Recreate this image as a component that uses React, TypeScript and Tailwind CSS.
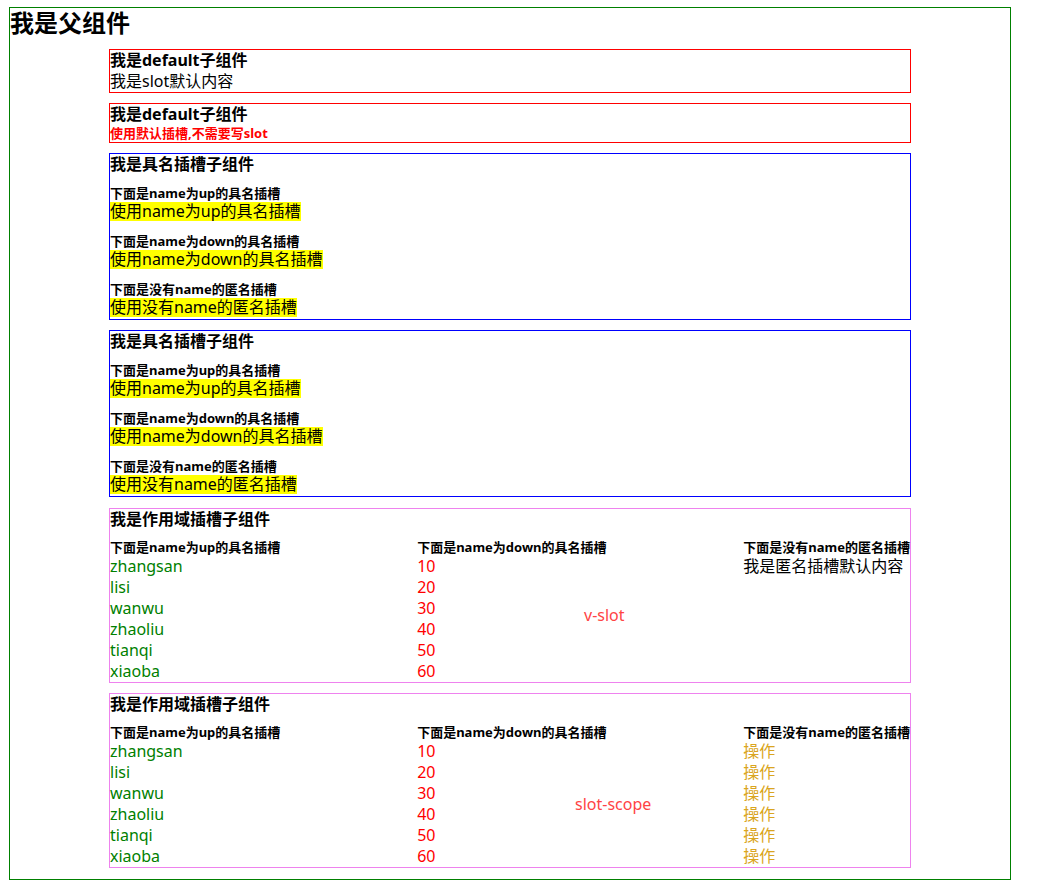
const font = { fontFamily: '"Noto Sans", "Noto Sans CJK SC", sans-serif' };

const people = [
  { name: "zhangsan", age: 10 },
  { name: "lisi", age: 20 },
  { name: "wanwu", age: 30 },
  { name: "zhaoliu", age: 40 },
  { name: "tianqi", age: 50 },
  { name: "xiaoba", age: 60 },
];

function Title({ children }: { children: React.ReactNode }) {
  return <div className="text-[16px] font-bold leading-[21px] text-black">{children}</div>;
}

function SmallHead({ children }: { children: React.ReactNode }) {
  return <div className="text-[13px] font-bold leading-[17px] text-black whitespace-nowrap">{children}</div>;
}

function Yellow({ children }: { children: React.ReactNode }) {
  return (
    <div className="h-[21px] text-[16px] leading-[19px]">
      <span className="inline-block bg-[#ffff00] align-top leading-[19px] text-black">{children}</span>
    </div>
  );
}

function NamedSlot({ className }: { className: string }) {
  return (
    <div className={"mx-auto w-[802px] border border-[#0000ff] " + className}>
      <Title>我是具名插槽子组件</Title>
      <div className="mt-[10px]">
        <SmallHead>下面是name为up的具名插槽</SmallHead>
        <Yellow>使用name为up的具名插槽</Yellow>
      </div>
      <div className="mt-[10px]">
        <SmallHead>下面是name为down的具名插槽</SmallHead>
        <Yellow>使用name为down的具名插槽</Yellow>
      </div>
      <div className="mt-[10px]">
        <SmallHead>下面是没有name的匿名插槽</SmallHead>
        <Yellow>使用没有name的匿名插槽</Yellow>
      </div>
    </div>
  );
}

function ScopedSlot({
  className,
  label,
  labelPos,
  ops,
}: {
  className: string;
  label: string;
  labelPos: string;
  ops: boolean;
}) {
  return (
    <div className={"relative mx-auto w-[802px] border border-[#ee82ee] " + className}>
      <Title>我是作用域插槽子组件</Title>
      <div className="mt-[9px] flex justify-between text-[16px] leading-[21px]">
        <div>
          <SmallHead>下面是name为up的具名插槽</SmallHead>
          {people.map((p) => (
            <div key={p.name} className="text-[#008000]">
              {p.name}
            </div>
          ))}
        </div>
        <div>
          <SmallHead>下面是name为down的具名插槽</SmallHead>
          {people.map((p) => (
            <div key={p.name} className="text-[#ff0000]">
              {p.age}
            </div>
          ))}
        </div>
        <div>
          <SmallHead>下面是没有name的匿名插槽</SmallHead>
          {ops ? (
            people.map((p) => (
              <div key={p.name} className="text-[#daa520]">
                操作
              </div>
            ))
          ) : (
            <div className="text-black">我是匿名插槽默认内容</div>
          )}
        </div>
      </div>
      <div className={"absolute text-[16px] leading-[21px] text-[#ff4444] " + labelPos}>{label}</div>
    </div>
  );
}

export default function App() {
  return (
    <div className="bg-white pl-[9px] pt-[7px] text-black" style={font}>
      <div className="h-[873px] w-[1002px] border border-[#008000]">
        <div className="text-[24px] font-bold leading-[30px]">我是父组件</div>

        <div className="mx-auto mt-[11px] w-[802px] border border-[#ff0000]">
          <Title>我是default子组件</Title>
          <div className="text-[16px] leading-[21px]">我是slot默认内容</div>
        </div>

        <div className="mx-auto mt-[10px] w-[802px] border border-[#ff0000]">
          <Title>我是default子组件</Title>
          <div className="text-[13px] font-bold leading-[17px] text-[#ff0000]">使用默认插槽,不需要写slot</div>
        </div>

        <NamedSlot className="mt-[10px]" />
        <NamedSlot className="mt-[10px]" />

        <ScopedSlot className="mt-[11px]" label="v-slot" labelPos="left-[474px] top-[96px]" ops={false} />
        <ScopedSlot className="mt-[10px]" label="slot-scope" labelPos="left-[465px] top-[100px]" ops={true} />
      </div>
    </div>
  );
}
